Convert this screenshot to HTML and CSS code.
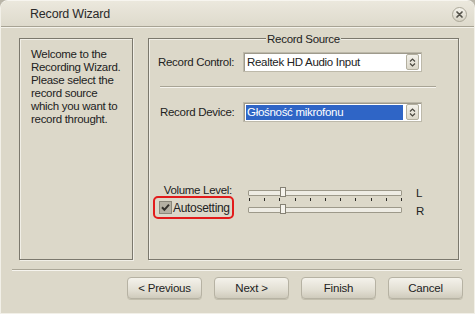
FILE: index.html
```html
<!DOCTYPE html>
<html lang="en">
<head>
    <meta charset="UTF-8">
    <title>Record Wizard</title>
    <link rel="stylesheet" href="styles.css">
</head>
<body>
    <div class="window">
        <div class="titlebar">
            <span class="title">Record Wizard</span>
            <span class="close">
                <svg width="15" height="15" viewBox="0 0 15 15">
                    <defs>
                        <linearGradient id="cg" x1="0" y1="0" x2="0" y2="1">
                            <stop offset="0" stop-color="#f7f5ee"/>
                            <stop offset="1" stop-color="#d6d2c3"/>
                        </linearGradient>
                    </defs>
                    <circle cx="7.5" cy="7.5" r="7" fill="url(#cg)" stroke="#aaa697"/>
                    <path d="M5 5 L10 10 M10 5 L5 10" stroke="#55534b" stroke-width="1.7" stroke-linecap="round"/>
                </svg>
            </span>
        </div>

        <div class="main">
            <div class="intro">
                Welcome to the<br>
                Recording Wizard.<br>
                Please select the<br>
                record source<br>
                which you want to<br>
                record throught.
            </div>

            <div class="group">
                <h3 class="group-title">Record Source</h3>

                <div class="row">
                    <span class="field-label">Record Control:</span>
                    <div class="combo">
                        <span class="combo-text">Realtek HD Audio Input</span>
                        <span class="spin">
                            <svg width="7" height="9" viewBox="0 0 7 9"><path d="M1 3.5 L3.5 1 L6 3.5 M1 5.5 L3.5 8 L6 5.5" fill="none" stroke="#4a4840" stroke-width="1.2"/></svg>
                        </span>
                    </div>
                </div>

                <div class="sep"></div>

                <div class="row row-device">
                    <span class="field-label">Record Device:</span>
                    <div class="combo">
                        <span class="combo-text selected">Głośność mikrofonu</span>
                        <span class="spin">
                            <svg width="7" height="9" viewBox="0 0 7 9"><path d="M1 3.5 L3.5 1 L6 3.5 M1 5.5 L3.5 8 L6 5.5" fill="none" stroke="#4a4840" stroke-width="1.2"/></svg>
                        </span>
                    </div>
                </div>

                <div class="volume">
                    <div class="vol-labels">
                        <div class="vol-title">Volume Level:</div>
                        <div class="auto">
                            <span class="check">
                                <svg width="13" height="13" viewBox="0 0 13 13">
                                    <rect x="0.5" y="0.5" width="12" height="12" fill="#b4b0a2" stroke="#8b887b"/>
                                    <path d="M3 6.3 L5.4 8.8 L10 3.6" fill="none" stroke="#34322c" stroke-width="2"/>
                                </svg>
                            </span>
                            Autosetting
                        </div>
                    </div>

                    <div class="sliders">
                        <div class="slider"><span class="thumb"></span></div>
                        <div class="ticks">
                            <i></i><i></i><i></i><i></i><i></i><i></i><i></i><i></i><i></i><i></i><i></i>
                        </div>
                        <div class="slider"><span class="thumb"></span></div>
                    </div>

                    <div class="channels">
                        <span>L</span>
                        <span>R</span>
                    </div>
                </div>
            </div>
        </div>

        <div class="footer-line"></div>

        <div class="buttons">
            <button class="btn">&lt; Previous</button>
            <button class="btn">Next &gt;</button>
            <button class="btn">Finish</button>
            <button class="btn">Cancel</button>
        </div>
    </div>
</body>
</html>
```

FILE: styles.css
```css
*{
    margin: 0;
    padding: 0;
    box-sizing: border-box;
}
body{
    width: 475px;
    height: 314px;
    background-color: #b9b5a8;
    font-family: "Liberation Sans", Arial, sans-serif;
    font-size: 11.5px;
    letter-spacing: -0.3px;
    color: #222;
    overflow: hidden;
}

.window{
    width: 475px;
    height: 314px;
    background-color: #dcd8c9;
    border: 1px solid #f2f0e8;
    border-top-color: #f7f5ef;
    border-radius: 8px 8px 0 0;
}

/* title bar */
.titlebar{
    height: 26px;
    display: flex;
    justify-content: space-between;
    align-items: center;
    padding: 0 7px 0 29px;
    border-bottom: 1px solid #a7a394;
    box-shadow: 0 1px 0 #f4f2ea;
    background: linear-gradient(#ebe8dd, #dedacc);
    border-radius: 7px 7px 0 0;
}
.title{
    font-size: 12.5px;
    letter-spacing: -0.2px;
    color: #2a2a2a;
}
.close{
    display: flex;
    margin-top: 2px;
}

/* panels */
.main{
    display: flex;
    gap: 15px;
    height: 222px;
    margin-top: 11px;
    padding-left: 18px;
}
.intro{
    width: 114px;
    border: 1px solid #7b786d;
    box-shadow: inset 1px 1px 0 #f1efe7, 1px 1px 0 #f1efe7;
    padding: 9px 0 0 11px;
    line-height: 13px;
}
.group{
    width: 311px;
    border: 1px solid #7b786d;
    box-shadow: inset 1px 1px 0 #f1efe7, 1px 1px 0 #f1efe7;
}
.group-title{
    width: fit-content;
    margin: -7px auto 0;
    padding: 0 1px;
    height: 14px;
    line-height: 14px;
    font-weight: normal;
    font-size: 11.5px;
    background-color: #dcd8c9;
}

.row{
    display: flex;
    align-items: center;
    margin-top: 6px;
    padding-left: 9px;
}
.row-device{
    margin-top: 14px;
    padding-left: 11px;
}
.field-label{
    width: 85px;
}
.row-device .field-label{
    width: 83px;
}
.combo{
    width: 179px;
    height: 20px;
    display: flex;
    align-items: center;
    padding: 1px 2px 1px 2px;
    background-color: #fff;
    border: 1px solid #bdb9aa;
    box-shadow: inset 1px 1px 0 #9e9a8c;
}
.combo-text{
    flex: 1;
    height: 15px;
    line-height: 15px;
    padding-left: 1px;
}
.combo-text.selected{
    background-color: #2f65c6;
    color: #fff;
    margin-right: 3px;
}
.spin{
    width: 13px;
    height: 16px;
    display: flex;
    align-items: center;
    justify-content: center;
    background: linear-gradient(#f3f1ea, #dcd8ca);
    border: 1px solid #b3af9f;
    border-radius: 2px;
}

.sep{
    height: 2px;
    margin: 14px 22px 0 11px;
    border-top: 1px solid #a8a495;
    border-bottom: 1px solid #f6f4ee;
}

/* volume */
.volume{
    display: flex;
    align-items: flex-start;
    margin-top: 62px;
    padding-left: 4px;
}
.vol-labels{
    width: 81px;
}
.vol-title{
    height: 12px;
    line-height: 12px;
    text-align: right;
    padding-right: 2px;
}
.auto{
    height: 23px;
    display: flex;
    align-items: center;
    gap: 1px;
    padding-left: 4px;
    font-size: 12px;
    border: 2px solid #e21b1b;
    border-radius: 5px;
}
.check{
    display: flex;
}

.sliders{
    width: 154px;
    margin: 1px 0 0 14px;
}
.slider{
    position: relative;
    height: 11px;
    padding-top: 5px;
}
.slider::before{
    content: "";
    display: block;
    height: 4px;
    background-color: #eeece4;
    border: 1px solid #9d998a;
    border-radius: 1px;
}
.thumb{
    position: absolute;
    left: 32px;
    top: 2px;
    width: 6px;
    height: 10px;
    background-color: #f5f3ec;
    border: 1px solid #858174;
}
.ticks{
    height: 6px;
    display: flex;
    justify-content: space-between;
    align-items: flex-end;
    padding: 0 0 1px 1px;
}
.ticks i{
    width: 1px;
    height: 3px;
    background-color: #2c2b27;
}

.channels{
    display: flex;
    flex-direction: column;
    gap: 4px;
    margin: 2px 0 0 14px;
    line-height: 14px;
}

/* footer */
.footer-line{
    height: 2px;
    margin: 9px 12px 0 11px;
    border-top: 1px solid #aaa697;
    border-bottom: 1px solid #f6f4ee;
}
.buttons{
    display: flex;
    justify-content: flex-end;
    gap: 12px;
    margin-top: 6px;
    padding-right: 11px;
}
.btn{
    width: 75px;
    height: 22px;
    font-family: inherit;
    font-size: 11.5px;
    letter-spacing: -0.2px;
    color: #222;
    background: linear-gradient(#f4f2eb, #e2dfd3 60%, #cfcbbc);
    border: 1px solid #b6b2a3;
    border-radius: 4px;
    box-shadow: 0 1px 0 #c2bead;
}
```
